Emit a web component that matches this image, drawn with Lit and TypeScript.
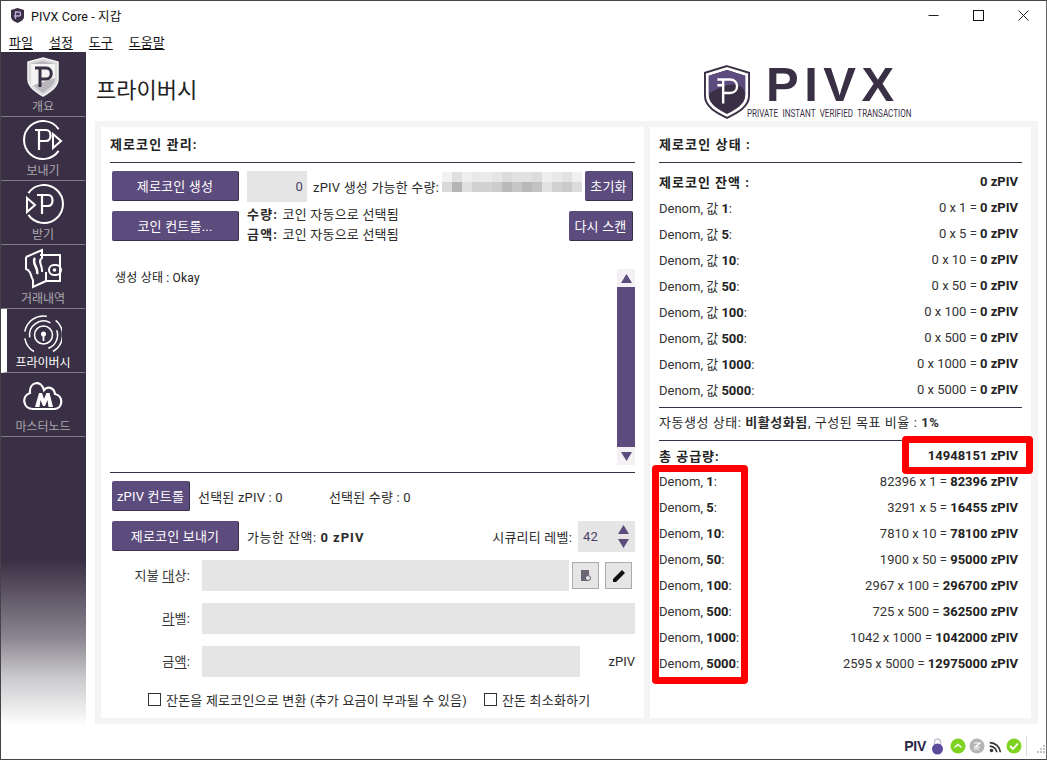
import { LitElement, html, css, svg } from "lit";
import { customElement } from "lit/decorators.js";

const PURPLE = "#5c4b7d";

const navIcons: Record<string, any> = {
  overview: svg`<svg width="34" height="40" viewBox="0 0 34 40"><path d="M17 1 L32 5 V22 C32 30 24 35 17 39 C10 35 2 30 2 22 V5 Z" fill="#d9d9dc" stroke="#f4f4f4" stroke-width="1.5"/><path d="M17 4 L29 7 V21 C29 28 22 32 17 36 C12 32 5 28 5 21 V7 Z" fill="#b9b7bd"/><path d="M5 7 L29 7 V21 L5 29 Z" fill="#f3f3f3"/><path d="M9 11 H20 C27 11 27 22 20 22 H14 M14 11 V30" fill="none" stroke="#3a3045" stroke-width="3"/></svg>`,
  send: svg`<svg width="44" height="42" viewBox="0 0 44 42" fill="none" stroke="#fff"><path d="M37.6 9.1 A19 19 0 1 0 37.6 30.9" stroke-width="2"/><path d="M14 10 H25 C31 10 31 21 25 21 H18 M18 10 V30" stroke-width="2.2"/><path d="M32 14 L40 21 L32 28 Z" stroke-width="2"/></svg>`,
  receive: svg`<svg width="44" height="42" viewBox="0 0 44 42" fill="none" stroke="#fff"><path d="M7.4 9.1 A19 19 0 1 1 7.4 30.9" stroke-width="2"/><path d="M16 11 H27 C33 11 33 22 27 22 H21 M21 11 V30" stroke-width="2.2"/><path d="M6 14 L14 21 L6 28 Z" stroke-width="2"/></svg>`,
  history: svg`<svg width="40" height="42" viewBox="0 0 40 42" fill="none" stroke="#fff" stroke-width="2"><path d="M17 7 H37 V33 H23"/><rect x="26" y="17" width="12" height="10" rx="5"/><circle cx="31.5" cy="22" r="1.8" fill="#fff" stroke="none"/><path d="M3 9 L19 2 V10 C14 13 20 18 19 24 M3 9 V21 C9 23 7 28 10 32 V39 L23 33 V24"/><path d="M12 10 C8 15 16 20 14 26" stroke-width="2.5"/></svg>`,
  privacy: svg`<svg width="38" height="42" viewBox="0 0 38 42" fill="none" stroke="#fff" stroke-width="1.5"><circle cx="19.5" cy="23" r="9"/><circle cx="19.5" cy="22" r="2.5" fill="#fff" stroke="none"/><path d="M19.5 22 V29" stroke-width="1.8"/><path d="M5.7 25.4 A14 14 0 0 1 26.5 10.9 M32.7 18.2 A14 14 0 0 1 24.3 36.2"/><path d="M0.8 19.7 A19 19 0 0 1 22.8 4.3 M31.7 8.4 A19 19 0 0 1 29 39.5 M10 39.5 A19 19 0 0 1 0.8 26.3"/></svg>`,
  masternode: svg`<svg width="40" height="32" viewBox="0 2 40 32"><path d="M10 30 H31 C40 30 41 17 32 15 C31 8 24 7 21 11 C18 0 6 3 7 14 C-2 17 0 30 10 30 Z" fill="none" stroke="#fff" stroke-width="2.2"/><path d="M12 28 L16 14 H19 L21 20 L23.5 14 H26.5 L30 28 H25.5 L24.5 21 L22 27 H20 L17.5 21 L16.5 28 Z" fill="#fff"/></svg>`,
};

const nav = [
  ["overview", "개요"],
  ["send", "보내기"],
  ["receive", "받기"],
  ["history", "거래내역"],
  ["privacy", "프라이버시"],
  ["masternode", "마스터노드"],
];

const mosaic = [
  "#f2f2f2", "#e0e0e0", "#efefef", "#e9e9e9", "#ebebeb", "#e5e5e5", "#dcdcdc", "#e2e2e2", "#e2e2e2", "#dcdcdc", "#efefef", "#e9e9e9", "#e2e2e2", "#f0f0f0",
  "#d9d9d9", "#b5b5b5", "#e0e0e0", "#d2d2d2", "#d2d2d2", "#cccccc", "#b9b9b9", "#c6c6c6", "#b9b9b9", "#c2c2c2", "#e2e2e2", "#d2d2d2", "#cbcbcb", "#dcdcdc",
];

const zRows: [string, string, string][] = ["1", "5", "10", "50", "100", "500", "1000", "5000"].map((d) => [d, `0 x ${d} = `, "0 zPIV"]);
const supply: [string, string, string][] = [
  ["1", "82396 x 1 = ", "82396 zPIV"],
  ["5", "3291 x 5 = ", "16455 zPIV"],
  ["10", "7810 x 10 = ", "78100 zPIV"],
  ["50", "1900 x 50 = ", "95000 zPIV"],
  ["100", "2967 x 100 = ", "296700 zPIV"],
  ["500", "725 x 500 = ", "362500 zPIV"],
  ["1000", "1042 x 1000 = ", "1042000 zPIV"],
  ["5000", "2595 x 5000 = ", "12975000 zPIV"],
];

@customElement("app-root")
export class AppRoot extends LitElement {
  static styles = css`
    :host {
      display: block;
      width: 1047px;
      height: 760px;
      font-family: "Roboto", "Noto Sans CJK KR", sans-serif;
      font-size: 13px;
      letter-spacing: 0.2px;
      color: #2b2b2b;
    }
    * { box-sizing: border-box; }
    .window {
      width: 1047px;
      height: 760px;
      border: 1px solid #45434a;
      border-right-color: #666;
      background: #fff;
      display: flex;
      flex-direction: column;
      position: relative;
      overflow: hidden;
    }
    .titlebar {
      height: 29px;
      flex: none;
      display: flex;
      align-items: center;
      padding-left: 10px;
      gap: 7px;
      color: #111;
      font-size: 12.5px;
      letter-spacing: 0.1px;
    }
    .winbtns { margin-left: auto; display: flex; }
    .winbtn { width: 45px; height: 29px; display: flex; align-items: center; justify-content: center; }
    .menu {
      height: 22px;
      flex: none;
      display: flex;
      align-items: center;
      gap: 16px;
      padding-left: 8px;
      letter-spacing: 0;
      color: #111;
    }
    .menu span { text-decoration: underline; text-underline-offset: 2px; }
    .main { flex: 1; display: flex; min-height: 0; }
    .sidebar {
      width: 85px;
      flex: none;
      height: 673px;
      padding-top: 1px;
      background: linear-gradient(#3a3045 0, #3a3045 508px, #8a8590 585px, #c9c8cb 625px, #fdfdfd 672px);
      display: flex;
      flex-direction: column;
    }
    .nav {
      height: 64px;
      flex: none;
      border-bottom: 1px solid #7f7c82;
      margin-right: 1px;
      display: flex;
      flex-direction: column;
      align-items: center;
      justify-content: flex-end;
      padding-bottom: 1px;
      color: #a9a6ad;
      font-size: 12px;
      letter-spacing: 0;
      line-height: 15px;
    }
    .nav.active { border-left: 6px solid #fff; color: #fff; padding-right: 6px; padding-left: 0; }
    .nav svg { display: block; }
    .nav .icon { height: 44px; margin-bottom: 1px; display: flex; align-items: center; justify-content: center; }
    .content { flex: 1; display: flex; flex-direction: column; min-width: 0; padding: 0 9px 0 9px; }
    .header { height: 69px; flex: none; display: flex; justify-content: space-between; padding-top: 12px; }
    .page-title { font-size: 22px; line-height: 26px; margin: 14px 0 0 1px; color: #222; letter-spacing: 0; }
    .logo { display: flex; align-items: flex-start; gap: 0; margin-right: 125px; }
    .logo svg { margin-right: -3px; }
    .logo-text { display: flex; flex-direction: column; width: 165px; }
    .pivx { font: bold 49px/41px "Liberation Sans", sans-serif; letter-spacing: 5.5px; color: #3a3045; height: 41px; margin-left: 19px; }
    .tag { font: 10px/11px "Roboto", sans-serif; letter-spacing: 0; color: #3a3045; word-spacing: 3px; white-space: nowrap; margin-top: 3px; transform: scaleX(0.805); transform-origin: left center; }
    .panels {
      width: 943px;
      height: 603px;
      background: #f6f3f5;
      padding: 6px;
      display: grid;
      grid-template-columns: 543px 381px;
      gap: 6px;
    }
    .panel { background: #fff; padding: 10px 9px 0; display: flex; flex-direction: column; min-height: 0; }
    .heading { height: 25px; line-height: 15px; font-weight: 700; color: #222; letter-spacing: 1.1px; }
    hr { border: none; border-top: 1px solid #3a3045; margin: 0; flex: none; }
    .btn {
      background: #5c4b7d;
      color: #fff;
      border-radius: 2px;
      border-bottom: 1px solid #3a3045;
      border-right: 1px solid #3a3045;
      height: 30px;
      display: flex;
      align-items: center;
      justify-content: center;
      flex: none;
      white-space: nowrap;
    }
    .btn.w127 { width: 127px; }
    .btn.w48 { width: 48px; }
    .btn.w64 { width: 64px; }
    .btn.w78 { width: 78px; }
    .row { display: flex; align-items: center; height: 30px; margin-left: 2px; margin-right: 2px; }
    .r1 { margin-top: 8px; }
    .r2 { margin-top: 10px; }
    .field { background: #e5e5e5; color: #555; height: 31px; }
    .qty { width: 60px; text-align: right; line-height: 31px; padding-right: 4px; margin-left: 8px; color: #4a3f66; }
    .mosaic { display: grid; grid-template-columns: repeat(14, 10px); grid-auto-rows: 10px; margin-left: 3px; align-self: flex-start; margin-top: 1px;}
    .spacer { flex: 1; }
    .ml6 { margin-left: 6px; white-space: nowrap; }
    .ml8 { margin-left: 8px; white-space: nowrap; letter-spacing: 0.5px; }
    .ml8 b { letter-spacing: 1px; }
    .sel { margin: 0 0 2px 8px; line-height: 20px; white-space: nowrap; }
    .sel b { letter-spacing: 1.2px; margin-right: 1px; }
    .log { height: 196px; margin-top: 28px; display: flex; flex: none; }
    .log-text { flex: 1; padding: 2px 0 0 5px; font-size: 12px; line-height: 14px; color: #222; }
    .scroll { width: 18px; display: flex; flex-direction: column; background: #fff; }
    .arrow { height: 18px; display: flex; align-items: center; justify-content: center; flex: none; background: #f3f1f4; }
    .thumb { flex: 1; background: #5c4b7d; }
    .hr2 { margin-top: 7px; }
    .sel2 { margin-left: 8px; gap: 46px; display: flex; white-space: nowrap; }
    .r3 { margin-top: 8px; }
    .spin { width: 57px; height: 31px; background: #e5e5e5; display: flex; align-items: center; justify-content: space-between; padding: 0 6px 0 5px; color: #4a3f66; margin: 0 -2px 0 6px; flex: none; }
    .arrows { display: flex; flex-direction: column; gap: 5px; }
    .form { display: grid; grid-template-columns: 92px 1fr; margin: 9px 0 0 0; row-gap: 12px; }
    .flabel { text-align: right; line-height: 31px; padding-right: 12px; color: #333; white-space: nowrap; }
    .flabel u { text-underline-offset: 2px; }
    .fline { display: flex; align-items: center; height: 31px; }
    .fline .field { flex: 1; }
    .tool { width: 27px; height: 27px; background: #e5e5e5; border: 1px solid #aaa; display: flex; align-items: center; justify-content: center; flex: none; }
    .tool + .tool { margin-left: 6px; }
    .tools { margin-left: 3px; display: flex; margin-right: 3px; }
    .unit { width: 55px; text-align: right; letter-spacing: 0; }
    .checks { display: flex; margin-top: 12px; align-items: center; padding-left: 38px; height: 20px; white-space: nowrap; }
    .check { display: flex; align-items: center; gap: 5px; }
    .check + .check { margin-left: 17px; }
    .box { width: 13px; height: 13px; border: 1px solid #333; flex: none; }
    .stats { display: flex; flex-direction: column; }
    .mt5 { margin-top: 5px; }
    .mt1 { margin-top: 1px; }
    .srow { height: 26px; display: flex; align-items: center; justify-content: space-between; padding-right: 4px; white-space: nowrap; color: #333; letter-spacing: 0; }
    .srow b { font-weight: 700; color: #222; }
    .srow.head { font-weight: 700; color: #222; }
    .srow.head span:first-child { letter-spacing: 1px; }
    .status { height: 32px; line-height: 30px; white-space: nowrap; letter-spacing: 0.55px; }
    .footer { height: 34px; flex: none; display: flex; align-items: center; justify-content: flex-end; gap: 1px; margin-right: -9px; padding-top: 10px; }
    .pivtxt { font: bold 14px "Liberation Sans", sans-serif; color: #2c2545; margin-right: 4px; letter-spacing: -0.3px; }
    .lock { margin-right: 4px; }
    .signal { margin: 0 1px; }
    .divider { width: 1px; height: 20px; background: #dedede; margin-left: 2px; }
    .grip { margin: 6px 0 0 8px; }
    .redbox { position: absolute; border: 7px solid #f00; border-radius: 4px; pointer-events: none; }
    .rb1 { left: 651px; top: 464px; width: 96px; height: 219px; }
    .rb2 { left: 901px; top: 435px; width: 131px; height: 38px; }
  `;

  private arrow(up: boolean) {
    return svg`<svg width="11" height="9" viewBox="0 0 11 9"><path d="${up ? "M5.5 0 L11 9 H0 Z" : "M0 0 H11 L5.5 9 Z"}" fill="${PURPLE}"/></svg>`;
  }

  private statRow(r: [string, string, string], withVal: boolean) {
    return html`<div class="srow">
      <span>Denom, ${withVal ? "값 " : ""}<b>${r[0]}</b>:</span>
      <span>${r[1]}<b>${r[2]}</b></span>
    </div>`;
  }

  render() {
    return html`
      <div class="window">
        <div class="titlebar">
          <svg width="13" height="15" viewBox="0 0 13 15"><path d="M6.5 0 L13 2 V9 C13 12 9 14 6.5 15 C4 14 0 12 0 9 V2 Z" fill="#3a3045"/><path d="M4.5 11 V4 H8 C10 4 10 8 8 8 H3" fill="none" stroke="#b9a9dc" stroke-width="1.4"/></svg>
          <span>PIVX Core - 지갑</span>
          <div class="winbtns">
            <div class="winbtn"><svg width="11" height="11"><path d="M0.5 5.5 H10.5" stroke="#222"/></svg></div>
            <div class="winbtn"><svg width="11" height="11"><rect x="0.5" y="0.5" width="10" height="10" fill="none" stroke="#111"/></svg></div>
            <div class="winbtn"><svg width="11" height="11"><path d="M0.5 0.5 L10.5 10.5 M10.5 0.5 L0.5 10.5" stroke="#222"/></svg></div>
          </div>
        </div>
        <div class="menu"><span>파일</span><span>설정</span><span>도구</span><span>도움말</span></div>
        <div class="main">
          <div class="sidebar">
            ${nav.map(
              ([k, label]) => html`<div class="nav ${k === "privacy" ? "active" : ""}"><div class="icon">${navIcons[k]}</div><span>${label}</span></div>`
            )}
          </div>
          <div class="content">
            <div class="header">
              <div class="page-title">프라이버시</div>
              <div class="logo">
                <svg width="46" height="56" viewBox="0 0 48 56">
                  <path d="M24 1 L47 8 V32 C47 44 34 50 24 55 C14 50 1 44 1 32 V8 Z" fill="#fff" stroke="#3a3045" stroke-width="2"/>
                  <path d="M24 5 L43 11 V32 C43 41 32 47 24 51 C16 47 5 41 5 32 V11 Z" fill="#3a3045"/>
                  <path d="M5 11 L24 5 L43 11 V32 C43 20 30 14 5 30 Z" fill="#5c4b7d"/>
                  <path d="M14 15 H27 C37 15 37 29 27 29 H20 M20 15 V40 M14 21 H20" fill="none" stroke="#fff" stroke-width="2.5"/>
                </svg>
                <div class="logo-text">
                  <div class="pivx">PIVX</div>
                  <div class="tag">PRIVATE INSTANT VERIFIED TRANSACTION</div>
                </div>
              </div>
            </div>
            <div class="panels">
              <div class="panel">
                <div class="heading">제로코인 관리:</div>
                <hr />
                <div class="row r1">
                  <div class="btn w127">제로코인 생성</div>
                  <div class="field qty">0</div>
                  <span class="ml6">zPIV 생성 가능한 수량:</span>
                  <div class="mosaic">${mosaic.map((c) => html`<i style="background:${c}"></i>`)}</div>
                  <div class="spacer"></div>
                  <div class="btn w48">초기화</div>
                </div>
                <div class="row r2">
                  <div class="btn w127">코인 컨트롤...</div>
                  <div class="sel"><b>수량:</b> 코인 자동으로 선택됨<br /><b>금액:</b> 코인 자동으로 선택됨</div>
                  <div class="spacer"></div>
                  <div class="btn w64">다시 스캔</div>
                </div>
                <div class="log">
                  <div class="log-text">생성 상태 : Okay</div>
                  <div class="scroll">
                    <div class="arrow">${this.arrow(true)}</div>
                    <div class="thumb"></div>
                    <div class="arrow">${this.arrow(false)}</div>
                  </div>
                </div>
                <hr class="hr2" />
                <div class="row r3">
                  <div class="btn w78">zPIV 컨트롤</div>
                  <div class="sel2"><span>선택된 zPIV : 0</span><span>선택된 수량 : 0</span></div>
                </div>
                <div class="row r2">
                  <div class="btn w127">제로코인 보내기</div>
                  <div class="ml8">가능한 잔액: <b>0 zPIV</b></div>
                  <div class="spacer"></div>
                  <span>시큐리티 레벨:</span>
                  <div class="spin"><span>42</span><div class="arrows">${this.arrow(true)}${this.arrow(false)}</div></div>
                </div>
                <div class="form">
                  <div class="flabel">지불 <u>대</u>상:</div>
                  <div class="fline">
                    <div class="field"></div>
                    <div class="tools">
                      <div class="tool"><svg width="12" height="13" viewBox="0 0 12 13"><path d="M1 1 H9 V12 H1 Z" fill="#6a6475"/><circle cx="8" cy="9" r="2.5" fill="#e5e5e5" stroke="#6a6475"/></svg></div>
                      <div class="tool"><svg width="14" height="14" viewBox="0 0 14 14"><path d="M10 1 L13 4 L4 13 L1 13 L1 10 Z" fill="#111"/></svg></div>
                    </div>
                  </div>
                  <div class="flabel"><u>라</u>벨:</div>
                  <div class="fline"><div class="field"></div></div>
                  <div class="flabel">금<u>액</u>:</div>
                  <div class="fline"><div class="field"></div><div class="unit">zPIV</div></div>
                </div>
                <div class="checks">
                  <div class="check"><div class="box"></div><span>잔돈을 제로코인으로 변환 (추가 요금이 부과될 수 있음)</span></div>
                  <div class="check"><div class="box"></div><span>잔돈 최소화하기</span></div>
                </div>
              </div>
              <div class="panel">
                <div class="heading">제로코인 상태 :</div>
                <hr />
                <div class="stats mt5">
                  <div class="srow head"><span>제로코인 잔액 :</span><span>0 zPIV</span></div>
                  ${zRows.map((r) => this.statRow(r, true))}
                </div>
                <hr class="mt5" />
                <div class="status">자동생성 상태: <b>비활성화됨</b>, 구성된 목표 비율 : <b>1%</b></div>
                <hr />
                <div class="stats mt1">
                  <div class="srow head"><span>총 공급량:</span><span>14948151 zPIV</span></div>
                  ${supply.map((r) => this.statRow(r, false))}
                </div>
              </div>
            </div>
            <div class="footer">
              <span class="pivtxt">PIV</span>
              <svg class="lock" width="13" height="18" viewBox="0 0 13 18"><path d="M3.5 8 V5 A3 3 0 0 1 9.5 5 V8" fill="none" stroke="#c8c2d8" stroke-width="1.5"/><circle cx="6.5" cy="12" r="5.5" fill="#5c4b9d"/></svg>
              <svg width="18" height="18"><circle cx="9" cy="9" r="7.5" fill="#7ed321"/><path d="M5.5 10.5 L9 7.5 L12.5 10.5" fill="none" stroke="#fff" stroke-width="1.5"/></svg>
              <svg width="18" height="18"><circle cx="9" cy="9" r="7.5" fill="#b5b5b5"/><path d="M6 6 H12 L7 10 H12 M6 12 H11" fill="none" stroke="#fff" stroke-width="1.2"/></svg>
              <svg class="signal" width="15" height="15" viewBox="0 0 17 17" fill="none" stroke="#333" stroke-width="2"><path d="M2 8 A8 8 0 0 1 10 15 M2 4 A12 12 0 0 1 14 15"/><circle cx="4" cy="13" r="2" fill="#333" stroke="none"/></svg>
              <svg width="18" height="18"><circle cx="9" cy="9" r="7.5" fill="#7ed321"/><path d="M5 9 L8 12 L13 6.5" fill="none" stroke="#fff" stroke-width="1.8"/></svg>
              <div class="divider"></div>
              <svg class="grip" width="10" height="10" viewBox="0 0 10 10" fill="#c4c4c4"><rect x="7" y="1" width="2" height="2"/><rect x="4" y="4" width="2" height="2"/><rect x="7" y="4" width="2" height="2"/><rect x="1" y="7" width="2" height="2"/><rect x="4" y="7" width="2" height="2"/><rect x="7" y="7" width="2" height="2"/></svg>
            </div>
          </div>
        </div>
        <div class="redbox rb1"></div>
        <div class="redbox rb2"></div>
      </div>
    `;
  }
}
